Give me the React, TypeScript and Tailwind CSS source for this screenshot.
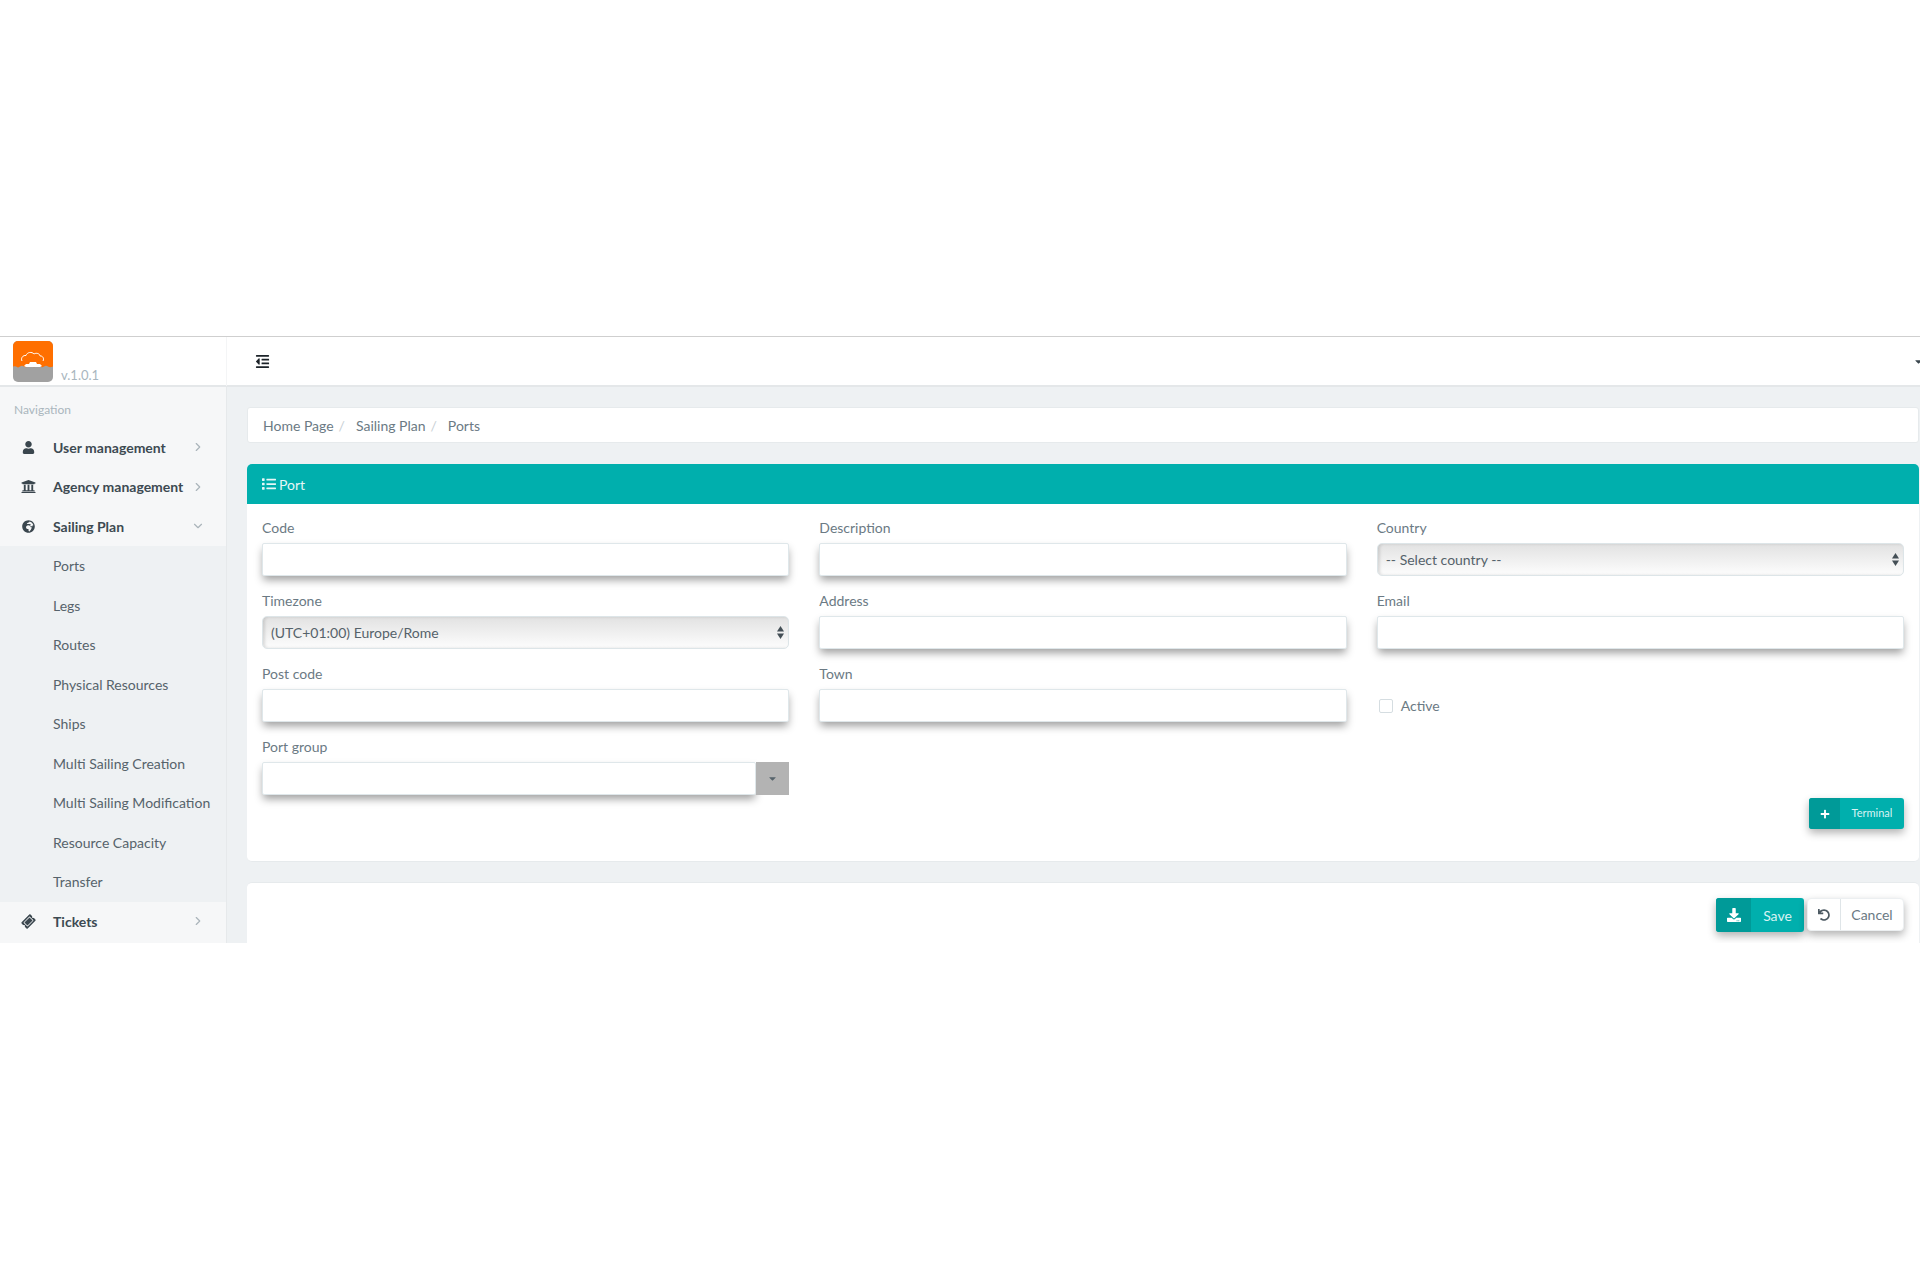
import { FaCaretDown, FaDownload, FaGlobeAfrica, FaList, FaOutdent, FaPlus, FaTicketAlt, FaUndo, FaUniversity, FaUser } from "react-icons/fa";
import { FiChevronDown, FiChevronRight } from "react-icons/fi";
import type { ReactNode } from "react";

const subItems = ["Ports", "Legs", "Routes", "Physical Resources", "Ships", "Multi Sailing Creation", "Multi Sailing Modification", "Resource Capacity", "Transfer"];

function Logo() {
  return (
    <svg width="40" height="41" viewBox="0 0 40 41" className="shrink-0">
      <rect width="40" height="41" rx="5" fill="#a1a1a1" />
      <path d="M0 5a5 5 0 0 1 5-5h30a5 5 0 0 1 5 5v20.500q-3 1.500-5 0t-4 0-4 0-4 0-4 0-4 0-4 0-4 0-3 .5-4-.5z" fill="#ff6f00" />
      <path d="M9 20c-1.500-3 1-6 4-5.500 1-3.500 6-4 8-1.500 2-1.500 6-.5 6 2 2.500-.5 4.500 2.500 3 5" fill="none" stroke="#fff" strokeWidth="1" />
      <path d="M11 25l2-2h3l1-2h6l1 2h3l2 2-2 1H13z" fill="#fff" />
    </svg>
  );
}

function MainItem({ icon, label, open }: { icon: ReactNode; label: string; open?: boolean }) {
  return (
    <div className="flex h-[39.5px] items-center text-[14px] font-bold text-[#3d4a52]">
      <span className="flex w-[53px] shrink-0 justify-center pl-[3px] text-[#3a464e]">{icon}</span>
      <span className="flex-1">{label}</span>
      <span className="mr-[21px] text-[#aab4ba]">{open ? <FiChevronDown size={14} /> : <FiChevronRight size={14} />}</span>
    </div>
  );
}

function Sidebar() {
  return (
    <aside className="w-[227px] shrink-0 border-r border-[#e6e9eb] bg-[#f6f7f8]">
      <div className="flex h-[40.500px] items-center pl-[14px] pt-[6px] text-[12px] text-[#aab6bd]">Navigation</div>
      <MainItem icon={<FaUser size={13} />} label="User management" />
      <MainItem icon={<FaUniversity size={15} />} label="Agency management" />
      <MainItem icon={<FaGlobeAfrica size={13} />} label="Sailing Plan" open />
      <div className="bg-[#eef1f3]">
        {subItems.map((item) => (
          <div key={item} className="flex h-[39.5px] items-center pl-[53px] text-[14px] text-[#56636b]">
            {item}
          </div>
        ))}
      </div>
      <MainItem icon={<FaTicketAlt size={13} className="-rotate-45" />} label="Tickets" />
    </aside>
  );
}

function Field({ label, children }: { label: string; children: ReactNode }) {
  return (
    <div className="mb-[15px]">
      <div className="mb-[5px] h-[20px] text-[14px] leading-[20px] text-[#6b7a84]">{label}</div>
      {children}
    </div>
  );
}

function TextInput() {
  return <input className="block h-[33px] w-full rounded-[2px] border border-[#dfe7ea] bg-white shadow-[0_5px_8px_-1px_rgba(0,0,0,0.38)]" />;
}

function SelectBox({ value }: { value: string }) {
  return (
    <div className="flex h-[33px] items-center justify-between rounded-[5px] border border-[#dde5e8] bg-linear-to-b from-[#e2e2e2] to-[#fdfdfd] pl-[8px] pr-[4px] text-[14px] text-[#55626a] shadow-[inset_2px_0_3px_rgba(0,0,0,0.12)]">
      <span>{value}</span>
      <svg width="7" height="13" viewBox="0 0 7 13" fill="#444f56">
        <path d="M3.500 0L7 5.500H0z" />
        <path d="M3.500 13L0 7.500h7z" />
      </svg>
    </div>
  );
}

export default function App() {
  return (
    <div className="h-[1280px] bg-white pt-[336px] font-['Lato','Noto_Sans',sans-serif]">
      <div className="h-[607px] overflow-hidden border-t border-[#cfcfcf]">
        <header className="flex h-[50px] items-center border-b-2 border-[#e4e7e9] bg-white">
          <div className="flex w-[227px] shrink-0 items-end border-r border-[#f4f5f6] pb-[4px] pl-[13px] pt-[4px]">
            <Logo />
            <span className="ml-[8px] text-[13px] leading-[14px] text-[#a9b6be]">v.1.0.1</span>
          </div>
          <FaOutdent size={15} className="ml-[28px] text-[#1c2329]" />
          <FaCaretDown size={11} className="-mr-[4px] ml-auto text-[#3a464e]" />
        </header>
        <div className="flex h-[556px]">
          <Sidebar />
          <main className="flex-1 overflow-hidden bg-[#eef1f3] pl-[20px] pr-px pt-[20px]">
            <nav className="flex h-[36px] items-center gap-[5px] rounded-[3px] border border-[#e6eaec] bg-white pl-[15px] text-[14px] text-[#6b7a84]">
              <span>Home Page</span>
              <span className="mr-[6px] text-[#c8d0d5]">/</span>
              <span>Sailing Plan</span>
              <span className="mr-[6px] text-[#c8d0d5]">/</span>
              <span>Ports</span>
            </nav>
            <div className="mt-[21px] flex h-[40px] items-center gap-[3px] rounded-t-[5px] bg-[#00afad] pl-[15px] text-[14px] text-[#e6f7f7]">
              <FaList size={14} />
              Port
            </div>
            <section className="h-[358px] rounded-b-[5px] border-b border-[#e6eaec] bg-white px-[15px] pt-[14px]">
              <div className="grid grid-cols-3 gap-x-[30px]">
                <Field label="Code"><TextInput /></Field>
                <Field label="Description"><TextInput /></Field>
                <Field label="Country"><SelectBox value="-- Select country --" /></Field>
                <Field label="Timezone"><SelectBox value="(UTC+01:00) Europe/Rome" /></Field>
                <Field label="Address"><TextInput /></Field>
                <Field label="Email"><TextInput /></Field>
                <Field label="Post code"><TextInput /></Field>
                <Field label="Town"><TextInput /></Field>
                <div className="flex items-center gap-[8px] pl-[2px] pt-[25px] pb-[15px] text-[14px] text-[#6b7a84]">
                  <span className="size-[14px] rounded-[2px] border border-[#d5dde1] bg-white" />
                  Active
                </div>
                <Field label="Port group">
                  <div className="flex h-[33px]">
                    <div className="flex-1 rounded-[2px] border border-[#dfe7ea] bg-white shadow-[0_5px_8px_-1px_rgba(0,0,0,0.38)]" />
                    <div className="flex w-[33px] items-center justify-center bg-[#b3b3b3] text-[#56636b]">
                      <FaCaretDown size={11} />
                    </div>
                  </div>
                </Field>
              </div>
              <div className="-mt-[12px] flex justify-end">
                <button className="flex h-[31px] w-[95px] overflow-hidden rounded-[3px] bg-[#00afad] text-[11px] text-[#d8f3f3] shadow-[0_4px_8px_rgba(0,0,0,0.3)]">
                  <span className="flex h-full w-[31px] items-center justify-center bg-[#009a98] text-white"><FaPlus size={10} /></span>
                  <span className="flex h-full flex-1 items-center justify-center">Terminal</span>
                </button>
              </div>
            </section>
            <section className="mt-[20px] flex h-[80px] items-start justify-end gap-[3px] rounded-t-[5px] border-t border-[#e6eaec] bg-white pr-[15px] pt-[15px]">
              <button className="flex h-[34px] w-[88px] overflow-hidden rounded-[3px] bg-[#00afad] text-[14px] text-[#d8f3f3] shadow-[0_4px_8px_rgba(0,0,0,0.3)]">
                <span className="flex h-full w-[35px] items-center justify-center bg-[#009a98] text-white"><FaDownload size={14} /></span>
                <span className="flex h-full flex-1 items-center justify-center">Save</span>
              </button>
              <button className="flex h-[33px] w-[97px] overflow-hidden rounded-[4px] border border-[#eceff1] bg-white text-[14px] text-[#6b7a84] shadow-[0_4px_8px_rgba(0,0,0,0.3)]">
                <span className="flex h-full w-[33px] items-center justify-center border-r border-[#dfe5e8] text-[#4d5a63]"><FaUndo size={12} /></span>
                <span className="flex h-full flex-1 items-center justify-center">Cancel</span>
              </button>
            </section>
          </main>
        </div>
      </div>
    </div>
  );
}
